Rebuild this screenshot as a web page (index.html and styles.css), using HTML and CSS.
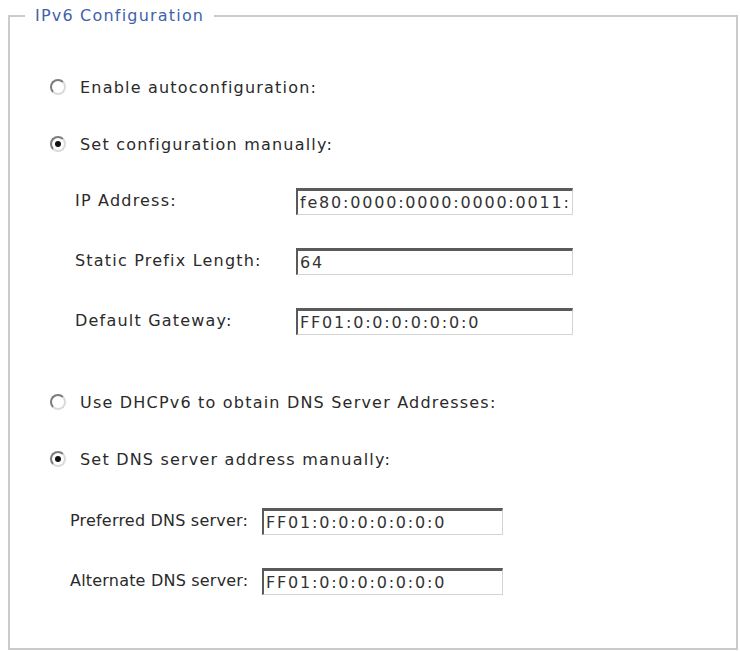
FILE: index.html
```html
<!DOCTYPE html>
<html>
<head>
<meta charset="utf-8">
<link rel="stylesheet" href="styles.css">
</head>
<body>
<form class="page">
  <fieldset class="group">
    <legend class="group-title">IPv6 Configuration</legend>
    <div class="form">
      <label class="option"><input class="radio" type="radio" name="mode"><span>Enable autoconfiguration:</span></label>
      <label class="option"><input class="radio" type="radio" name="mode" checked><span>Set configuration manually:</span></label>
      <div class="fields fields-ip">
        <span class="field-label">IP Address:</span>
        <input class="text" type="text" value="fe80:0000:0000:0000:0011:11ff:fe00:0001">
        <span class="field-label">Static Prefix Length:</span>
        <input class="text" type="text" value="64">
        <span class="field-label">Default Gateway:</span>
        <input class="text" type="text" value="FF01:0:0:0:0:0:0:0">
      </div>
      <label class="option option-gap"><input class="radio" type="radio" name="dns"><span>Use DHCPv6 to obtain DNS Server Addresses:</span></label>
      <label class="option"><input class="radio" type="radio" name="dns" checked><span>Set DNS server address manually:</span></label>
      <div class="fields fields-dns">
        <span class="field-label">Preferred DNS server:</span>
        <input class="text" type="text" value="FF01:0:0:0:0:0:0:0">
        <span class="field-label">Alternate DNS server:</span>
        <input class="text" type="text" value="FF01:0:0:0:0:0:0:0">
      </div>
    </div>
  </fieldset>
</form>
</body>
</html>
```

FILE: styles.css
```css
html, body {
  margin: 0;
  padding: 0;
  background: #ffffff;
}

.page {
  margin: 0;
  padding: 6px 2px 0 8px;
  font-family: "DejaVu Sans", Verdana, sans-serif;
  font-size: 16px;
  color: #2a2a2a;
  letter-spacing: 1.2px;
}

.group {
  margin: 0;
  height: 644px;
  box-sizing: border-box;
  border: 2px solid #cbcbcb;
  padding: 0;
  min-inline-size: 0;
}

.group-title {
  margin-left: 15px;
  padding: 0 10px;
  color: #3f62aa;
  line-height: 20px;
}

.form {
  display: flex;
  flex-direction: column;
  gap: 29px;
  padding: 47px 0 0 40px;
}

.option {
  display: flex;
  align-items: center;
  height: 28px;
  gap: 14px;
}

.option-gap {
  margin-top: 24px;
}

.radio {
  appearance: none;
  -webkit-appearance: none;
  margin: 0;
  width: 16px;
  height: 16px;
  border-radius: 50%;
  box-sizing: border-box;
  border: 2px solid #dadada;
  border-top-color: #7c7c7c;
  border-left-color: #7c7c7c;
  background: #fff;
  position: relative;
  flex: none;
}

.radio:checked::after {
  content: "";
  position: absolute;
  left: 3px;
  top: 3px;
  width: 6px;
  height: 6px;
  border-radius: 50%;
  background: #111;
}

.fields {
  display: grid;
  row-gap: 32px;
  align-items: center;
}

.fields-ip {
  grid-template-columns: 221px 277px;
  margin-left: 25px;
}

.fields-dns {
  grid-template-columns: 192px 241px;
  margin-left: 20px;
  margin-top: 5px;
  letter-spacing: 0.2px;
}

.field-label {
  line-height: 28px;
  white-space: nowrap;
}

.text {
  box-sizing: border-box;
  height: 27px;
  width: 100%;
  margin: 0;
  padding: 1px 2px 0 2px;
  font-family: "DejaVu Sans", Verdana, sans-serif;
  font-size: 16px;
  letter-spacing: 1.8px;
  color: #333;
  background: #fff;
  border-style: solid;
  border-width: 3px 1px 1px 2px;
  border-color: #5a5a5a #d4d4d4 #d4d4d4 #5a5a5a;
  outline: none;
}
```
